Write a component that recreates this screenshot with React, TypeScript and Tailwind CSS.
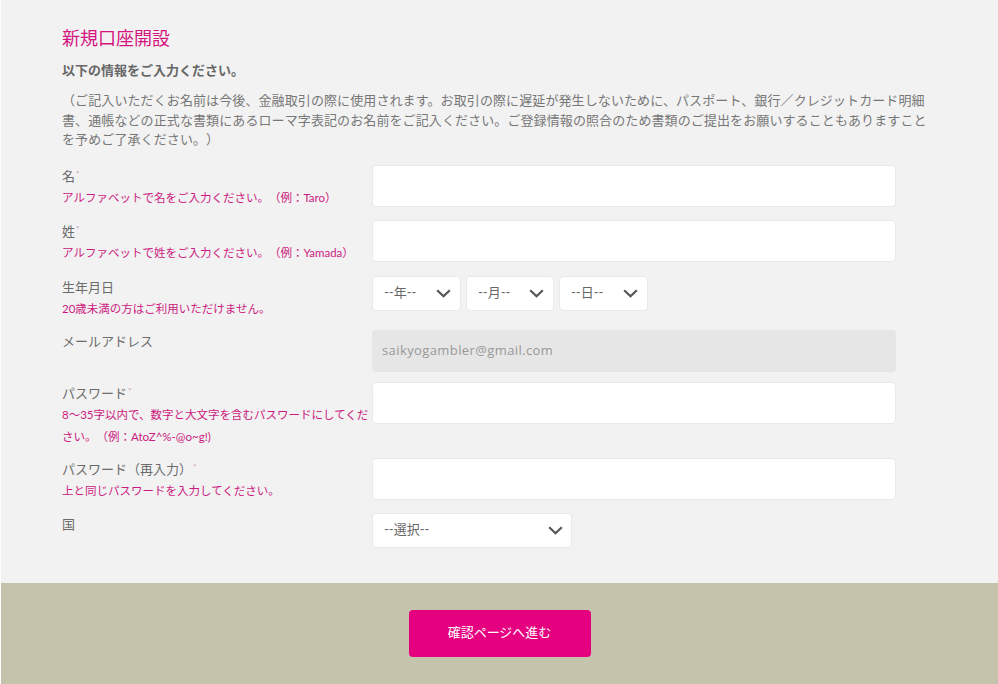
import { ReactNode } from "react";

const font = { fontFamily: 'Lato, "Noto Sans CJK JP", sans-serif' };

const Chevron = () => (
  <svg width="15" height="9" viewBox="0 0 15 9" fill="none" className="shrink-0">
    <polyline points="1.2,1.2 7.5,7.3 13.8,1.2" stroke="#555" strokeWidth="2.2" />
  </svg>
);

const Req = () => <sup className="ml-[1px] text-[8px] text-[#c9a0b8]">*</sup>;

const Field = ({
  label,
  hint,
  className,
  children,
}: {
  label: ReactNode;
  hint?: ReactNode;
  className?: string;
  children: ReactNode;
}) => {
  return (
    <div className={`flex flex-row ${className ?? ""}`}>
      <div className="w-[310px] shrink-0">
        <div className="text-[13px] leading-[22px] text-[#6b6b6b]">{label}</div>
        {hint && (
          <div className="text-[11.5px] leading-[22px] text-[#cc1a80] [text-spacing-trim:space-all]">
            {hint}
          </div>
        )}
      </div>
      {children}
    </div>
  );
};

const TextInput = () => (
  <div className="h-[42px] w-[524px] rounded-[4px] border border-[#e9e9e9] bg-white" />
);

const Select = ({ text, width, pr }: { text: string; width: string; pr: string }) => (
  <div
    className={`flex h-[35px] items-center justify-between rounded-[4px] border border-[#e9e9e9] bg-white pl-[11px] ${width} ${pr}`}
  >
    <span className="text-[13px] text-[#666]">{text}</span>
    <Chevron />
  </div>
);

export default function App() {
  return (
    <div className="min-h-screen w-full border-l border-white bg-[#f2f2f2]" style={font}>
      <div className="px-[61px] pt-[26px] pb-[35px]">
        <h1 className="text-[18px] leading-[24px] font-normal text-[#d4157f]">新規口座開設</h1>
        <p className="mt-[10px] text-[13px] leading-[20px] font-bold text-[#666]">
          以下の情報をご入力ください。
        </p>
        <p className="mt-[11px] w-[870px] text-[13px] leading-[19.5px] tracking-[0.1px] text-[#777] [text-spacing-trim:space-all]">
          （ご記入いただくお名前は今後、金融取引の際に使用されます。お取引の際に遅延が発生しないために、パスポート、銀行／クレジットカード明細書、通帳などの正式な書類にあるローマ字表記のお名前をご記入ください。ご登録情報の照合のため書類のご提出をお願いすることもありますことを予めご了承ください。）
        </p>

        <div className="mt-[15px] flex flex-col">
          <Field
            label={<>名<Req /></>}
            hint="アルファベットで名をご入力ください。（例：Taro）"
          >
            <TextInput />
          </Field>
          <Field
            className="mt-[11px]"
            label={<>姓<Req /></>}
            hint="アルファベットで姓をご入力ください。（例：Yamada）"
          >
            <TextInput />
          </Field>
          <Field
            className="mt-[12px]"
            label="生年月日"
            hint="20歳未満の方はご利用いただけません。"
          >
            <div className="flex flex-row gap-[5px]">
              <Select text="--年--" width="w-[89px]" pr="pr-[9px]" />
              <Select text="--月--" width="w-[88px]" pr="pr-[9px]" />
              <Select text="--日--" width="w-[89px]" pr="pr-[9px]" />
            </div>
          </Field>
          <Field className="mt-[10px]" label="メールアドレス">
            <div
              className="flex h-[42px] w-[524px] items-center rounded-[4px] bg-[#e6e6e6] px-[10px] text-[13px] tracking-[0.4px] text-[#999]"
              style={{ fontFamily: '"Open Sans", sans-serif' }}
            >
              saikyogambler@gmail.com
            </div>
          </Field>
          <Field
            className="mt-[10px]"
            label={<>パスワード<Req /></>}
            hint="8〜35字以内で、数字と大文字を含むパスワードにしてください。（例：AtoZ^%-@o~g!)"
          >
            <TextInput />
          </Field>
          <Field
            className="mt-[10px]"
            label={<>パスワード（再入力）<Req /></>}
            hint="上と同じパスワードを入力してください。"
          >
            <TextInput />
          </Field>
          <Field className="mt-[11px]" label="国">
            <Select text="--選択--" width="w-[200px]" pr="pr-[8px]" />
          </Field>
        </div>
      </div>

      <div className="flex h-[110px] justify-center bg-[#c5c3ac] pt-[27px]">
        <button className="h-[47px] w-[182px] rounded-[4px] bg-[#e4007f] text-[13px] font-normal text-white">
          確認ページへ進む
        </button>
      </div>
    </div>
  );
}
